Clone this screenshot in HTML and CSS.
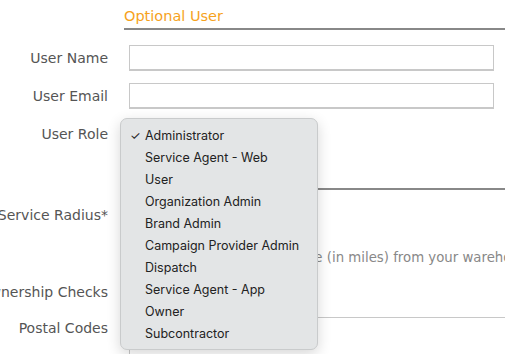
FILE: index.html
```html
<!DOCTYPE html>
<html lang="en">
<head>
    <meta charset="UTF-8">
    <meta name="viewport" content="width=device-width, initial-scale=1.0">
    <title>Optional User</title>
    <link rel="stylesheet" href="styles.css">
</head>
<body>
    <div class="form">
        <div class="section">
            <h2 class="section-title">Optional User</h2>
        </div>
        <div class="row">
            <label class="row-label" for="userName">User Name</label>
            <input class="field" type="text" id="userName">
        </div>
        <div class="row">
            <label class="row-label" for="userEmail">User Email</label>
            <input class="field" type="text" id="userEmail">
        </div>
        <div class="row role-row">
            <label class="row-label" for="userRole">User Role</label>
            <div class="select-wrap">
                <div class="field field-small"></div>
                <ul class="menu">
                    <li class="menu-item selected">Administrator</li>
                    <li class="menu-item">Service Agent - Web</li>
                    <li class="menu-item">User</li>
                    <li class="menu-item">Organization Admin</li>
                    <li class="menu-item">Brand Admin</li>
                    <li class="menu-item">Campaign Provider Admin</li>
                    <li class="menu-item">Dispatch</li>
                    <li class="menu-item">Service Agent - App</li>
                    <li class="menu-item">Owner</li>
                    <li class="menu-item">Subcontractor</li>
                </ul>
            </div>
        </div>
        <div class="section section-second">
            <h2 class="section-title">Service Area</h2>
        </div>
        <div class="row radius-row">
            <label class="row-label" for="radius">Service Radius*</label>
            <div class="radius-field">
                <input class="field field-small" type="text" id="radius">
                <p class="help">Enter the maximum distance (in miles) from your warehouse that you service.</p>
            </div>
        </div>
        <div class="row check-row">
            <label class="row-label" for="ownership">Ownership Checks</label>
            <div></div>
        </div>
        <div class="row postal-row">
            <label class="row-label" for="postal">Postal Codes</label>
            <textarea class="field area" id="postal"></textarea>
        </div>
    </div>
</body>
</html>
```

FILE: styles.css
```css
body {
    margin: 0;
    background-color: #fff;
    font-family: "DejaVu Sans", sans-serif;
    color: #555;
    overflow: hidden;
}
.form {
    width: 505px;
}
.section {
    padding-left: 124px;
}
.section-title {
    margin: 0;
    padding-top: 7px;
    height: 30px;
    box-sizing: border-box;
    font-size: 14.5px;
    line-height: 18px;
    font-weight: normal;
    color: #f6a21c;
    border-bottom: 2px solid #888;
}
.section-second {
    margin-top: 13px;
}
.section-second .section-title {
    color: transparent;
}
.row {
    display: grid;
    grid-template-columns: 108px 365px;
    column-gap: 21px;
    align-items: start;
    margin-top: 15px;
}
.row + .row {
    margin-top: 12px;
}
.row-label {
    display: flex;
    justify-content: flex-end;
    white-space: nowrap;
    font-size: 14px;
    line-height: 26px;
    color: #555;
}
.field {
    display: block;
    box-sizing: border-box;
    width: 365px;
    height: 26px;
    border: 1px solid #c8c8c8;
    border-bottom-width: 2px;
    background-color: #fff;
    margin: 0;
    padding: 0 6px;
}
.field-small {
    width: 150px;
}
.select-wrap {
    position: relative;
}
.menu {
    position: absolute;
    left: -9px;
    top: -3px;
    width: 198px;
    margin: 0;
    padding: 6px 0 4px 0;
    list-style: none;
    background-color: #e3e5e6;
    border: 1px solid #c9cbcc;
    border-radius: 7px;
    box-shadow: 0 4px 14px rgba(0, 0, 0, 0.16);
    box-sizing: border-box;
    z-index: 5;
}
.menu-item {
    height: 22px;
    line-height: 22px;
    padding-left: 24px;
    font-family: "Inter", "Liberation Sans", sans-serif;
    font-size: 12.5px;
    color: #222;
    position: relative;
}
.selected::before {
    content: "\2713";
    position: absolute;
    left: 9px;
    font-size: 12px;
}
.radius-row {
    margin-top: 12px;
}
.help {
    margin: 22px 0 0 0;
    font-size: 13.3px;
    line-height: 16px;
    color: #888;
    white-space: nowrap;
}
.row.check-row {
    margin-top: 13px;
}
.row.postal-row {
    margin-top: 12px;
}
.postal-row .row-label {
    line-height: 22px;
}
.area {
    width: 390px;
    height: 40px;
    resize: none;
    border-bottom-width: 1px;
}
```
